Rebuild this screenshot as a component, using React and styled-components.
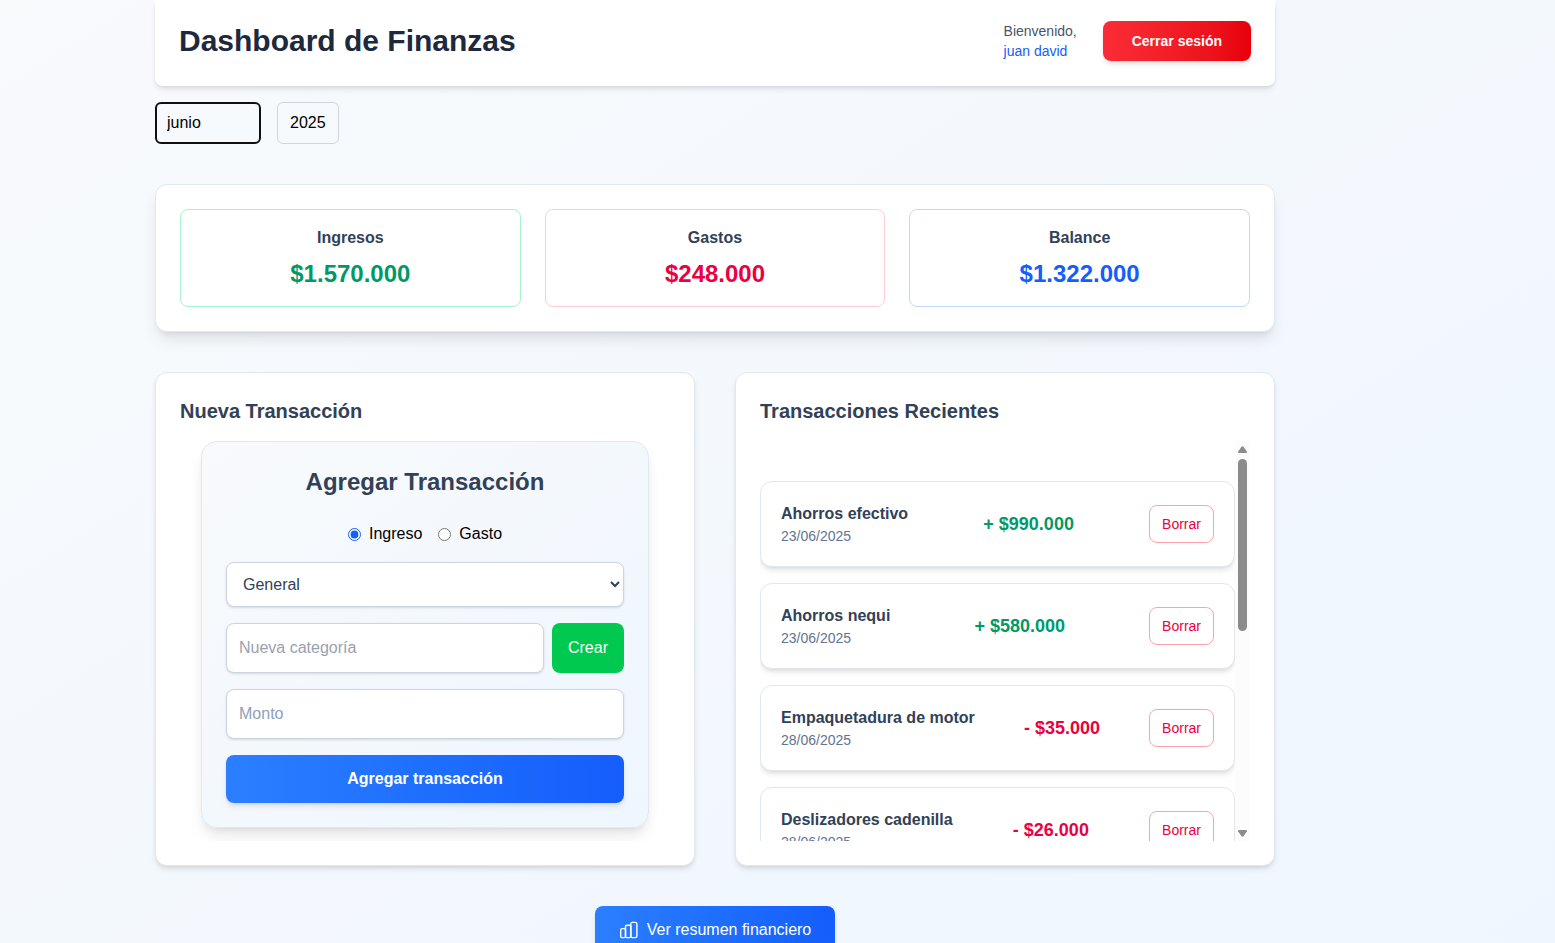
import React from "react";
import styled, { createGlobalStyle, css } from "styled-components";

const GlobalStyle = createGlobalStyle`
  *, *::before, *::after { box-sizing: border-box; }
  body { margin: 0; }
  h1, h2, h3, p, ul { margin: 0; padding: 0; }
  body, button, input, select {
    font-family: "Liberation Sans", Arial, sans-serif;
    font-size: 16px;
    line-height: 24px;
  }
`;

const shadowSm = "0 1px 3px rgba(0,0,0,0.1), 0 1px 2px -1px rgba(0,0,0,0.1)";
const shadowMd = "0 4px 6px -1px rgba(0,0,0,0.1), 0 2px 4px -2px rgba(0,0,0,0.1)";
const shadowLg = "0 10px 15px -3px rgba(0,0,0,0.1), 0 4px 6px -4px rgba(0,0,0,0.1)";

const tones = {
  income: { text: "#009966", border: "#a4f4cf" },
  expense: { text: "#ec003f", border: "#ffccd3" },
  balance: { text: "#155dfc", border: "#bedbff" },
};

const Page = styled.div`
  min-height: 100vh;
  padding-right: 125px;
  overflow: hidden;
  background: linear-gradient(to bottom right in oklab, #f8fafc, #eff6ff);
`;

const Container = styled.main`
  max-width: 1152px;
  margin: 0 auto;
  padding: 0 16px 40px;
  display: flex;
  flex-direction: column;
  gap: 40px;
`;

const Top = styled.div`
  display: flex;
  flex-direction: column;
  gap: 16px;
`;

const Header = styled.header`
  display: flex;
  align-items: center;
  justify-content: space-between;
  padding: 21px 24px 25px;
  background: #fff;
  border-radius: 2px 2px 8px 8px;
  box-shadow: ${shadowMd};
`;

const Title = styled.h1`
  font-size: 30px;
  line-height: 36px;
  color: #1d293d;
`;

const Session = styled.div`
  display: flex;
  align-items: center;
  gap: 26px;
`;

const Welcome = styled.p`
  display: flex;
  flex-direction: column;
  font-size: 14px;
  line-height: 20px;
  color: #45556c;
`;

const UserName = styled.span`
  color: #155dfc;
`;

const Button = styled.button`
  border: 0;
  border-radius: 8px;
  padding: 12px 16px;
  color: #fff;
  cursor: pointer;
`;

const LogoutButton = styled(Button)`
  padding: 10px 29px;
  font-size: 14px;
  line-height: 20px;
  font-weight: 700;
  background: linear-gradient(to right in oklab, #fb2c36, #e7000b);
  box-shadow: ${shadowMd};
`;

const PrimaryButton = styled(Button)`
  display: flex;
  align-items: center;
  justify-content: center;
  gap: 8px;
  padding: 12px 24px;
  font-weight: ${(p) => (p.$strong ? 700 : 400)};
  background: linear-gradient(to right in oklab, #2b7fff, #155dfc);
  box-shadow: ${shadowMd};
`;

const Filters = styled.div`
  display: flex;
  gap: 16px;
`;

const FilterSelect = styled.select`
  appearance: none;
  height: 42px;
  margin: 0;
  border: 1px solid #d1d5dc;
  border-radius: 6px;
  padding: 0 12px;
  background: transparent;
  color: #000;
  ${(p) =>
    p.$active &&
    css`
      width: 106px;
      border: 2px solid #101010;
      padding: 0 10px;
    `}
`;

const Card = styled.section`
  min-width: 0;
  padding: 24px;
  background: #fff;
  border: 1px solid #e2e8f0;
  border-radius: 12px;
  box-shadow: ${(p) => (p.$raised ? shadowLg : shadowMd)};
`;

const Summary = styled(Card)`
  display: grid;
  grid-template-columns: repeat(3, 1fr);
  gap: 24px;
`;

const Stat = styled.div`
  display: flex;
  flex-direction: column;
  gap: 8px;
  padding: 16px;
  text-align: center;
  border: 1px solid ${(p) => tones[p.$tone].border};
  border-radius: 8px;
`;

const StatLabel = styled.h2`
  font-size: 16px;
  line-height: 24px;
  color: #314158;
`;

const StatValue = styled.p`
  font-size: 24px;
  line-height: 32px;
  font-weight: 700;
  color: ${(p) => tones[p.$tone].text};
`;

const Columns = styled.div`
  display: grid;
  grid-template-columns: repeat(2, 1fr);
  gap: 40px;
`;

const CardTitle = styled.h2`
  margin-bottom: 16px;
  font-size: 20px;
  line-height: 28px;
  color: #314158;
`;

const ScrollArea = styled.div`
  flex: 1;
  min-width: 0;
  height: 400px;
  overflow: auto;
  scrollbar-width: none;
`;

const Form = styled.form`
  display: flex;
  flex-direction: column;
  gap: 16px;
  max-width: 448px;
  margin: 0 auto;
  padding: 24px;
  border: 1px solid #e2e8f0;
  border-radius: 16px;
  background: linear-gradient(to bottom right in oklab, #f8fafc, #eff6ff);
  box-shadow: ${shadowLg};
`;

const FormTitle = styled.h3`
  margin-bottom: 8px;
  font-size: 24px;
  line-height: 32px;
  text-align: center;
  color: #314158;
`;

const RadioRow = styled.div`
  display: flex;
  justify-content: center;
  gap: 16px;
`;

const RadioLabel = styled.label`
  display: flex;
  align-items: center;
  gap: 8px;
`;

const Radio = styled.input`
  width: 13px;
  height: 13px;
  margin: 0;
  accent-color: #155dfc;
`;

const field = css`
  width: 100%;
  min-width: 0;
  margin: 0;
  border: 1px solid #cad5e2;
  border-radius: 8px;
  background: #fff;
  color: #314158;
  box-shadow: ${shadowSm};
`;

const Input = styled.input`
  ${field}
  height: 50px;
  padding: 12px;
  &::placeholder { color: ${(p) => p.$placeholder || "#90a1b9"}; opacity: 1; }
`;

const CategorySelect = styled.select`
  ${field}
  height: 45px;
  padding: 0 12px;
`;

const InlineFields = styled.div`
  display: flex;
  gap: 8px;
`;

const CreateButton = styled(Button)`
  background: #00c950;
`;

const ListFrame = styled.div`
  display: flex;
`;

const List = styled.ul`
  display: flex;
  flex-direction: column;
  gap: 16px;
  padding: 40px 0 16px;
  list-style: none;
`;

const Item = styled.li`
  display: flex;
  align-items: center;
  justify-content: space-between;
  padding: 20px;
  background: #fff;
  border: 1px solid #e2e8f0;
  border-radius: 12px;
  box-shadow: ${shadowMd};
`;

const ItemName = styled.p`
  font-weight: 700;
  color: #314158;
`;

const ItemDate = styled.p`
  font-size: 14px;
  line-height: 20px;
  color: #62748e;
`;

const Amount = styled.p`
  font-size: 18px;
  line-height: 28px;
  font-weight: 700;
  color: ${(p) => tones[p.$tone].text};
`;

const DeleteButton = styled.button`
  padding: 8px 12px;
  font-size: 14px;
  line-height: 20px;
  color: #ec003f;
  background: transparent;
  border: 1px solid #ffa1ad;
  border-radius: 8px;
  cursor: pointer;
`;

const ScrollTrack = styled.div`
  display: flex;
  flex-direction: column;
  align-items: center;
  justify-content: space-between;
  width: 15px;
  padding: 4px 0 3px;
  background: #fcfcfc;
`;

const ScrollRail = styled.div`
  flex: 1;
  width: 9px;
  padding: 5px 0;
`;

const ScrollThumb = styled.div`
  height: 47%;
  border-radius: 5px;
  background: #8b8b8b;
`;

const Actions = styled.div`
  display: flex;
  justify-content: center;
`;

function Arrow({ down }) {
  return (
    <svg width="9" height="9" viewBox="0 0 9 9" fill="#8b8b8b">
      <path d={down ? "M0 2.2Q0 1 1 1H8Q9 1 9 2.2L5.5 7.2Q4.5 8.4 3.5 7.2Z" : "M0 6.8Q0 8 1 8H8Q9 8 9 6.8L5.5 1.8Q4.5 .6 3.5 1.8Z"} />
    </svg>
  );
}

function BarsIcon() {
  return (
    <svg width="20" height="20" viewBox="0 0 20 20" fill="none" stroke="currentColor" strokeWidth="1.4" strokeLinejoin="round" aria-hidden="true">
      <rect x="1.7" y="8.6" width="4.8" height="9" rx="1.3" />
      <rect x="6.5" y="5.2" width="5.3" height="12.4" rx="1.3" />
      <rect x="11.8" y="2.4" width="6.1" height="15.2" rx="1.6" />
    </svg>
  );
}

const stats = [
  { label: "Ingresos", value: "$1.570.000", tone: "income" },
  { label: "Gastos", value: "$248.000", tone: "expense" },
  { label: "Balance", value: "$1.322.000", tone: "balance" },
];

const transactions = [
  { name: "Ahorros efectivo", date: "23/06/2025", amount: "+ $990.000", tone: "income" },
  { name: "Ahorros nequi", date: "23/06/2025", amount: "+ $580.000", tone: "income" },
  { name: "Empaquetadura de motor", date: "28/06/2025", amount: "- $35.000", tone: "expense" },
  { name: "Deslizadores cadenilla", date: "28/06/2025", amount: "- $26.000", tone: "expense" },
];

export default function App() {
  return (
    <Page>
      <GlobalStyle />
      <Container>
        <Top>
          <Header>
            <Title>Dashboard de Finanzas</Title>
            <Session>
              <Welcome>
                Bienvenido,
                <UserName>juan david</UserName>
              </Welcome>
              <LogoutButton type="button">Cerrar sesión</LogoutButton>
            </Session>
          </Header>
          <Filters>
            <FilterSelect $active aria-label="Mes" defaultValue="junio">
              <option>junio</option>
            </FilterSelect>
            <FilterSelect aria-label="Año" defaultValue="2025">
              <option>2025</option>
            </FilterSelect>
          </Filters>
        </Top>

        <Summary $raised>
          {stats.map((s) => (
            <Stat key={s.label} $tone={s.tone}>
              <StatLabel>{s.label}</StatLabel>
              <StatValue $tone={s.tone}>{s.value}</StatValue>
            </Stat>
          ))}
        </Summary>

        <Columns>
          <Card>
            <CardTitle>Nueva Transacción</CardTitle>
            <ScrollArea>
              <Form onSubmit={(e) => e.preventDefault()}>
                <FormTitle>Agregar Transacción</FormTitle>
                <RadioRow>
                  <RadioLabel>
                    <Radio type="radio" name="tipo" defaultChecked />
                    Ingreso
                  </RadioLabel>
                  <RadioLabel>
                    <Radio type="radio" name="tipo" />
                    Gasto
                  </RadioLabel>
                </RadioRow>
                <CategorySelect aria-label="Categoría" defaultValue="General">
                  <option>General</option>
                </CategorySelect>
                <InlineFields>
                  <Input aria-label="Nueva categoría" placeholder="Nueva categoría" $placeholder="#99a1af" />
                  <CreateButton type="button">Crear</CreateButton>
                </InlineFields>
                <Input aria-label="Monto" placeholder="Monto" />
                <PrimaryButton type="submit" $strong>Agregar transacción</PrimaryButton>
              </Form>
            </ScrollArea>
          </Card>

          <Card>
            <CardTitle>Transacciones Recientes</CardTitle>
            <ListFrame>
              <ScrollArea>
                <List>
                  {transactions.map((t) => (
                    <Item key={t.name}>
                      <div>
                        <ItemName>{t.name}</ItemName>
                        <ItemDate>{t.date}</ItemDate>
                      </div>
                      <Amount $tone={t.tone}>{t.amount}</Amount>
                      <DeleteButton type="button">Borrar</DeleteButton>
                    </Item>
                  ))}
                </List>
              </ScrollArea>
              <ScrollTrack aria-hidden="true">
                <Arrow />
                <ScrollRail>
                  <ScrollThumb />
                </ScrollRail>
                <Arrow down />
              </ScrollTrack>
            </ListFrame>
          </Card>
        </Columns>

        <Actions>
          <PrimaryButton type="button">
            <BarsIcon />
            Ver resumen financiero
          </PrimaryButton>
        </Actions>
      </Container>
    </Page>
  );
}
